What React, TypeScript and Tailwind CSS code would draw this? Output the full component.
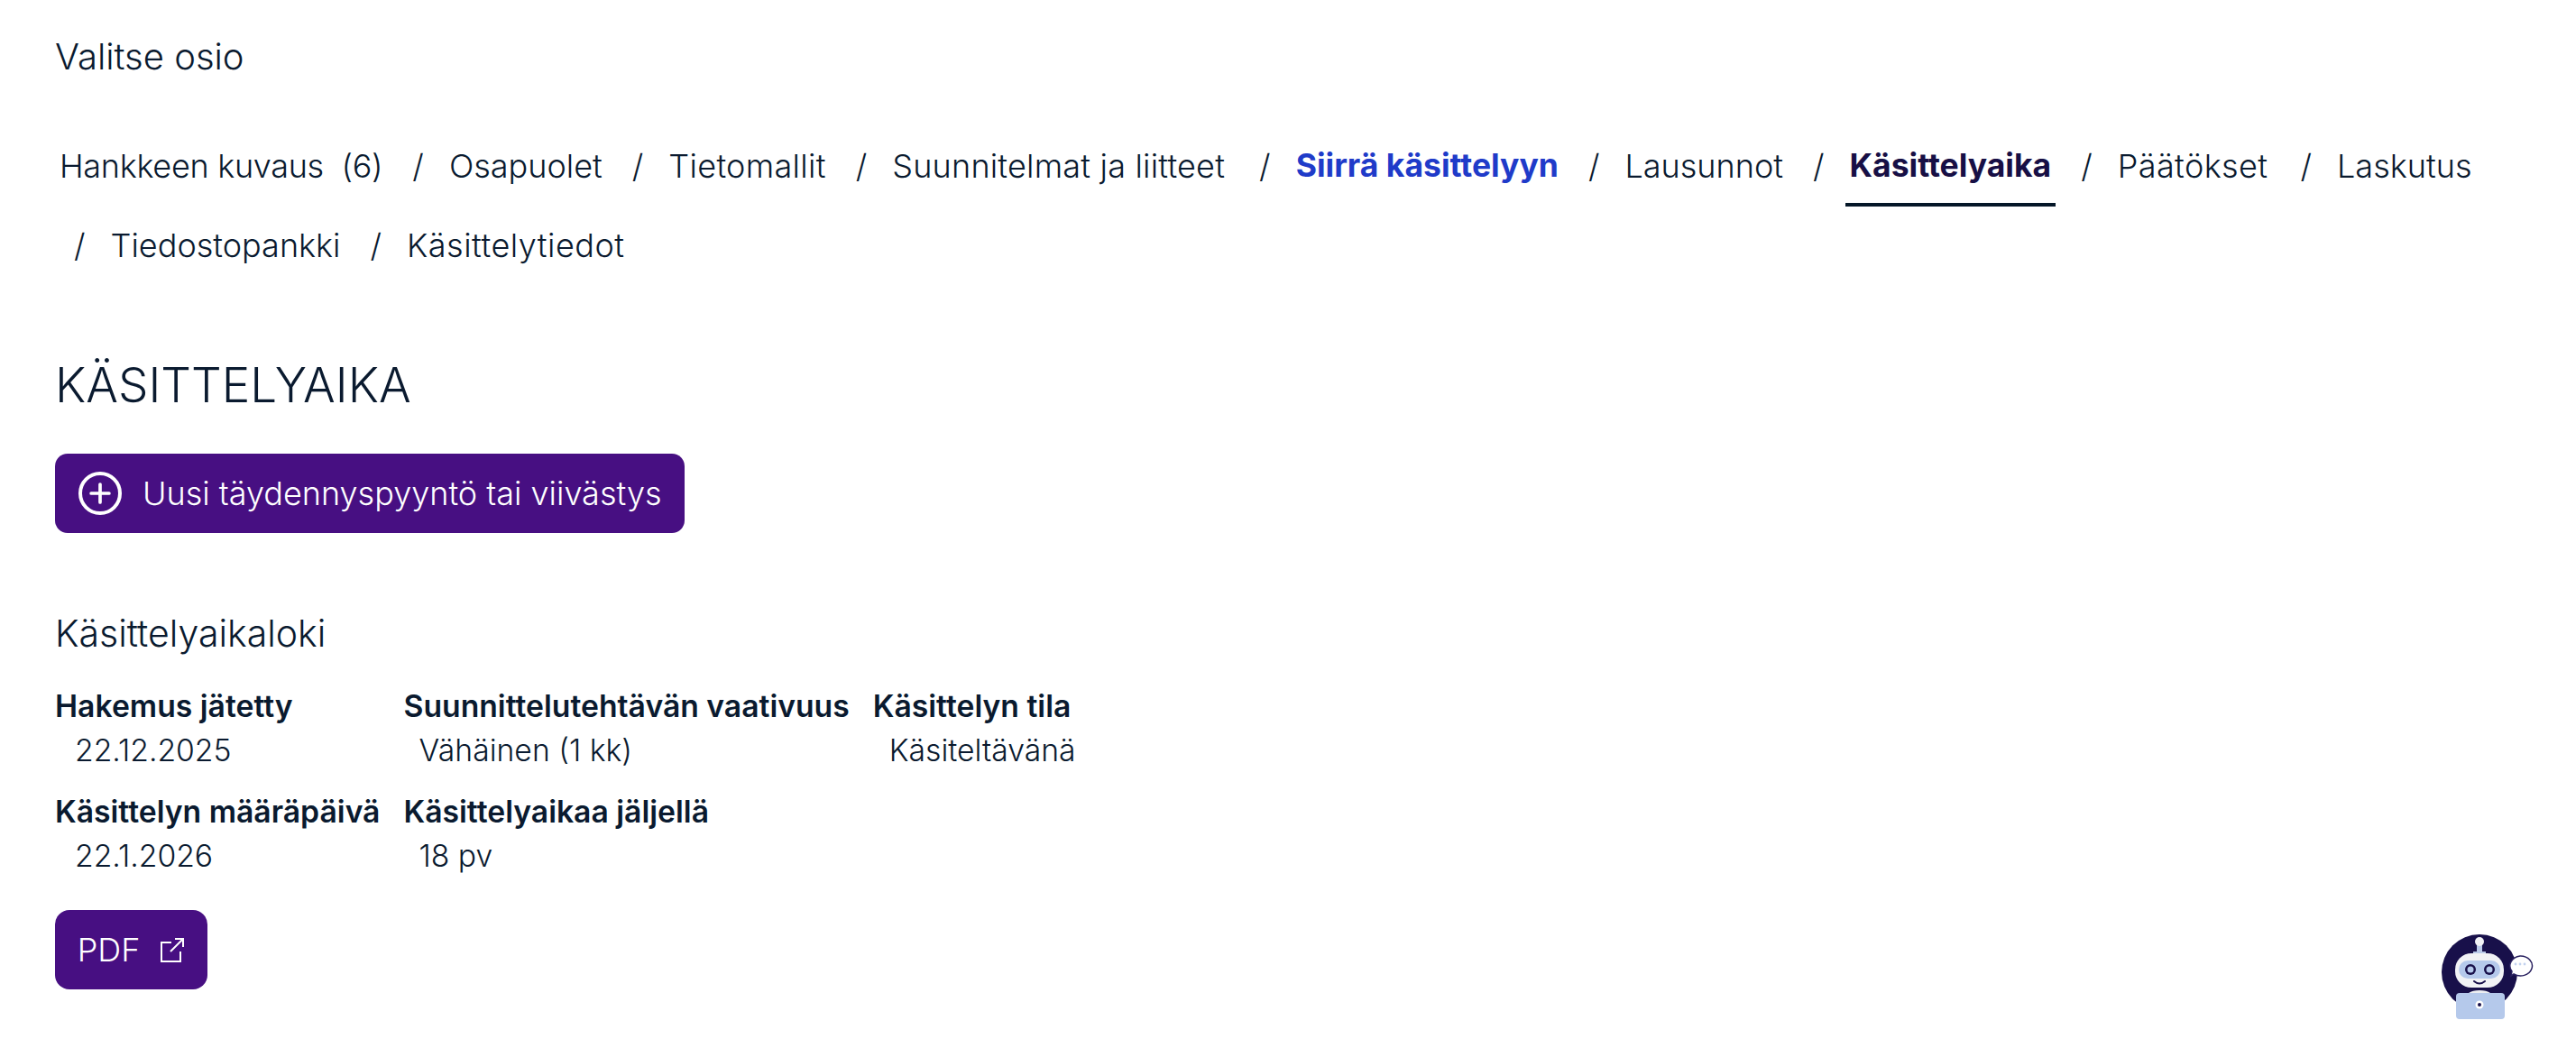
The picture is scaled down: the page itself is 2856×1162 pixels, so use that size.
import { Plus } from 'lucide-react'

const FONT = "font-['Inter','Noto_Sans',sans-serif]"

type NavItem = { label: string; tone?: 'action' | 'active'; tracking?: string; sepLeft?: string }

const NAV_ITEMS: NavItem[] = [
  { label: 'Hankkeen kuvaus\u00a0 (6)', tracking: 'tracking-[-0.3px]' },
  { label: 'Osapuolet' },
  { label: 'Tietomallit', tracking: 'tracking-[0.3px]' },
  { label: 'Suunnitelmat ja liitteet', tracking: 'tracking-[0.2px]' },
  { label: 'Siirrä käsittelyyn', tone: 'action', sepLeft: 'ml-[33px]' },
  { label: 'Lausunnot' },
  { label: 'Käsittelyaika', tone: 'active' },
  { label: 'Päätökset', tracking: 'tracking-[0.4px]' },
  { label: 'Laskutus', sepLeft: 'ml-[31px]' },
  { label: 'Tiedostopankki', sepLeft: 'ml-[21px]' },
  { label: 'Käsittelytiedot', tracking: 'tracking-[0.5px]' },
]

const LOG_FIELDS = [
  { title: 'Hakemus jätetty', value: '22.12.2025', indent: 'pl-[22px]' },
  { title: 'Suunnittelutehtävän vaativuus', value: 'Vähäinen (1 kk)', indent: 'pl-[17px]' },
  { title: 'Käsittelyn tila', value: 'Käsiteltävänä', indent: 'pl-[18px]' },
  { title: 'Käsittelyn määräpäivä', value: '22.1.2026', indent: 'pl-[22px]' },
  { title: 'Käsittelyaikaa jäljellä', value: '18 pv', indent: 'pl-[17px]' },
]

function NavLink({ item }: { item: NavItem }) {
  if (item.tone === 'action') {
    return <a className="h-[88px] px-[5px] flex items-center text-[35.5px] font-bold text-[#1f3bc9] whitespace-pre">{item.label}</a>
  }
  if (item.tone === 'active') {
    return (
      <a className="h-[88px] px-[5px] flex items-center text-[35.5px] font-bold text-[#170f45] whitespace-pre relative">
        {item.label}
        <span className="absolute left-0 right-0 top-[85px] h-1 bg-[#051728]" />
      </a>
    )
  }
  return <a className={`h-[88px] px-[5px] flex items-center whitespace-pre ${item.tracking ?? ''}`}>{item.label}</a>
}

function ExternalIcon() {
  return (
    <svg width="28" height="28" viewBox="0 0 28 28" fill="none" stroke="currentColor" strokeWidth="2">
      <path d="M13 6H2v21h21V16" />
      <path d="M12 16 26 2M17 2h9v9" />
    </svg>
  )
}

function ChatBot() {
  return (
    <svg className="absolute left-[2700px] top-[1032px]" width="112" height="100" viewBox="0 0 112 100" fill="none">
      <circle cx="49" cy="46" r="42" fill="#18104a" />
      <path d="M46 14h6v9h4v4h-14v-4h4z" fill="#b9c9e8" />
      <circle cx="49" cy="12" r="5" fill="#f1f2f5" />
      <rect x="22" y="25" width="54" height="38" rx="18" fill="#f1f2f5" />
      <rect x="26" y="33" width="46" height="20" rx="10" fill="#b5c9eb" />
      <circle cx="39" cy="43" r="6" fill="#18104a" />
      <circle cx="39" cy="43" r="3.5" fill="#b5c9eb" />
      <circle cx="60" cy="43" r="6" fill="#18104a" />
      <circle cx="60" cy="43" r="3.5" fill="#b5c9eb" />
      <path d="M43 56q6 5 12 0" stroke="#18104a" strokeWidth="2" strokeLinecap="round" />
      <path d="M33 78q0-12 16-12t16 12z" fill="#eceef2" />
      <rect x="23" y="69" width="54" height="29" rx="4" fill="#b5c9eb" />
      <circle cx="49" cy="82" r="4.5" fill="#fff" />
      <circle cx="49" cy="82" r="2" fill="#18104a" />
      <path d="M94 28a13 11 0 1 1-7 20l-3 2 1-5a13 11 0 0 1 9-17z" fill="#fff" stroke="#2a2260" strokeWidth="1.5" />
      <circle cx="89" cy="37" r="1.4" fill="#c3d3ef" />
      <circle cx="94" cy="37" r="1.4" fill="#c3d3ef" />
      <circle cx="99" cy="37" r="1.4" fill="#c3d3ef" />
    </svg>
  )
}

export default function App() {
  return (
    <div className={`${FONT} relative min-h-[1162px] bg-white pl-[61px] text-[#0a1a2f] font-light text-[36px] leading-none`}>
      <div className="pt-[43px] h-[140px] text-[40px] font-light">Valitse osio</div>

      <nav className="flex flex-wrap items-center">
        {NAV_ITEMS.map((item, i) => (
          <div key={item.label} className="flex items-center">
            {i > 0 && <span className={`${item.sepLeft ?? 'ml-[28px]'} mr-[23px]`}>/</span>}
            <NavLink item={item} />
          </div>
        ))}
      </nav>

      <h1 className="mt-[79px] text-[53px] font-light leading-[64px]">KÄSITTELYAIKA</h1>

      <button className="mt-[44px] h-[88px] pl-[26px] pr-[25px] rounded-[14px] bg-[#470f82] text-white flex items-center gap-[23px] font-light">
        <span className="w-12 h-12 rounded-full border-4 border-white flex items-center justify-center">
          <Plus size={34} strokeWidth={2.6} />
        </span>
        Uusi täydennyspyyntö tai viivästys
      </button>

      <h2 className="mt-[87px] text-[41px] font-light leading-[48px]">Käsittelyaikaloki</h2>

      <div className="mt-[32px] grid grid-cols-[auto_auto_auto] justify-start gap-x-[26px]">
        {LOG_FIELDS.map((field) => (
          <div key={field.title} className="h-[117px]">
            <div className="text-[33.7px] font-semibold leading-[50px] whitespace-nowrap">{field.title}</div>
            <div className={`text-[33.7px] leading-[48px] font-light ${field.indent}`}>{field.value}</div>
          </div>
        ))}
      </div>

      <button className="mt-[17px] h-[88px] w-[169px] rounded-[16px] bg-[#470f82] text-white flex items-center justify-center gap-[22px] font-light">
        PDF
        <ExternalIcon />
      </button>

      <ChatBot />
    </div>
  )
}
